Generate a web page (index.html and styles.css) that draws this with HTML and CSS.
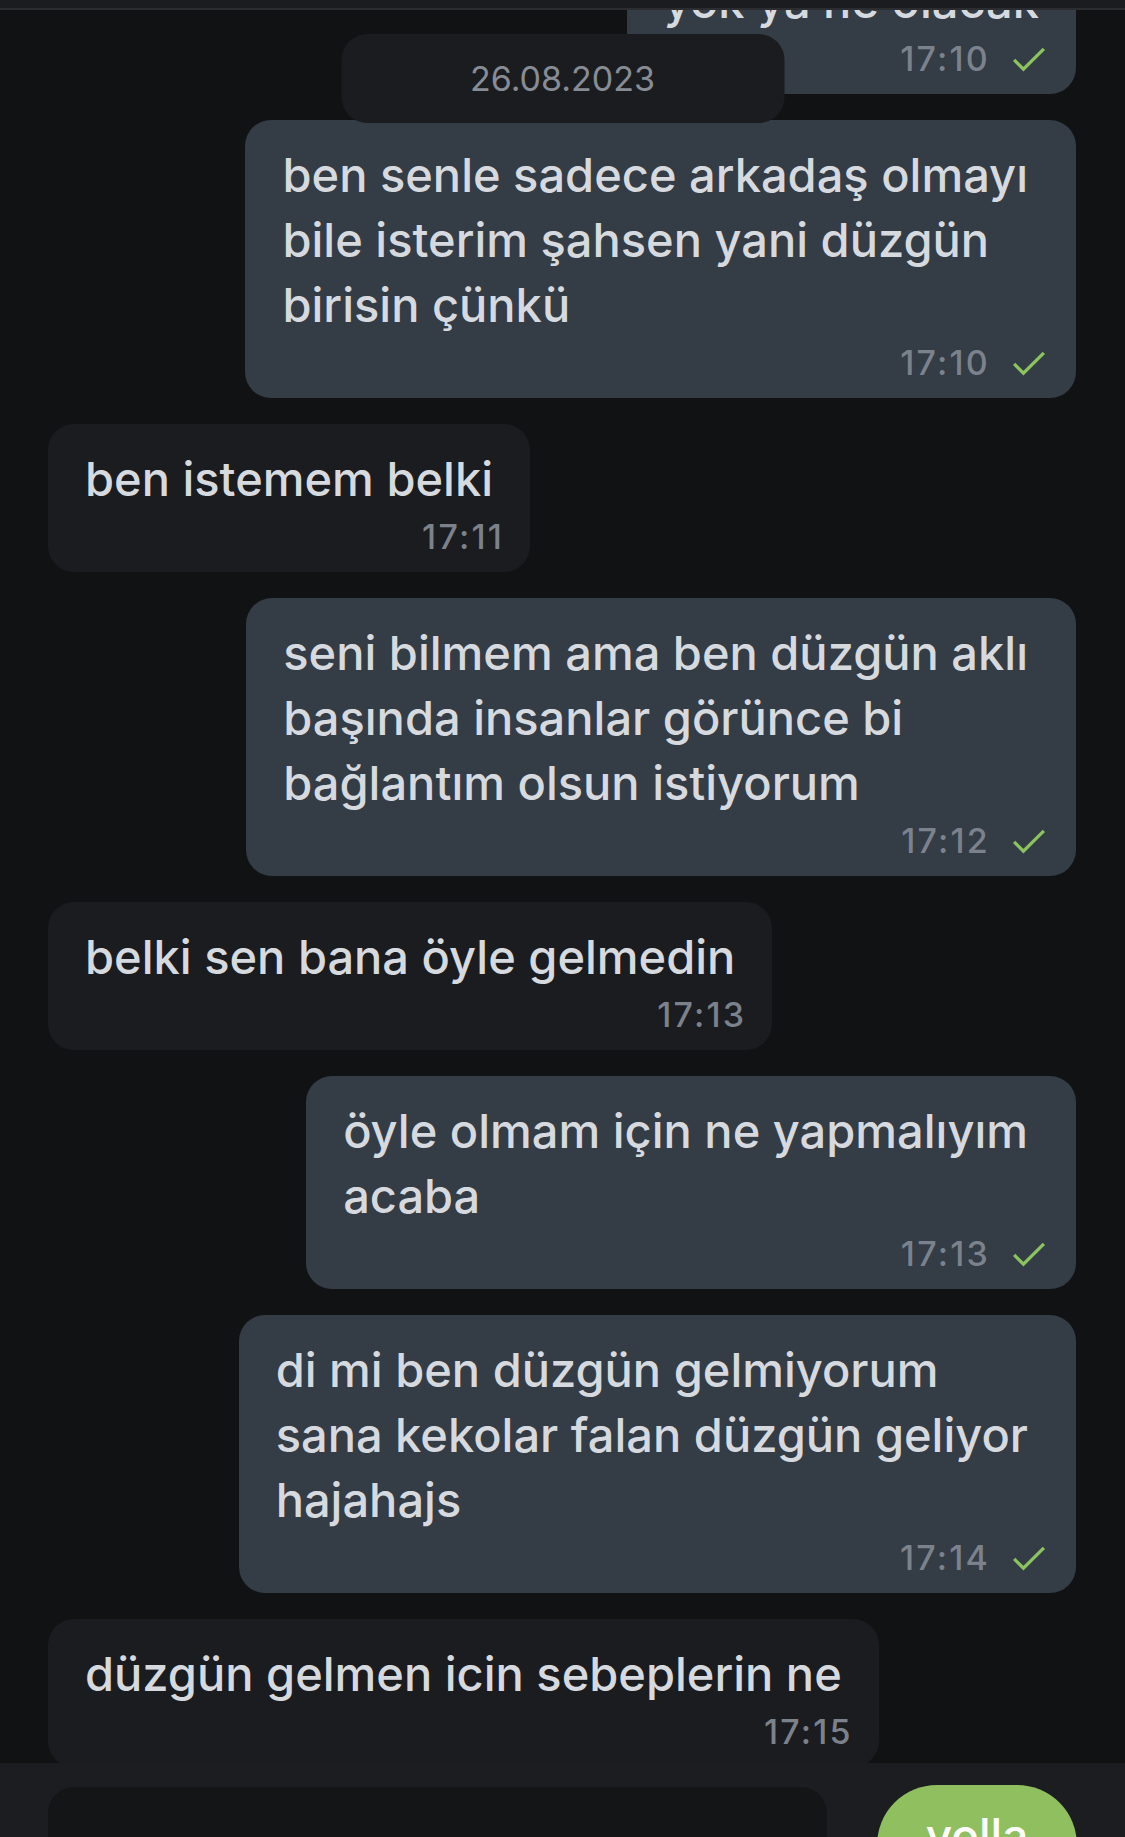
FILE: index.html
```html
<!DOCTYPE html>
<html lang="tr">
<head>
  <meta charset="UTF-8">
  <meta name="viewport" content="width=device-width, initial-scale=1.0">
  <title>Sohbet</title>
  <link rel="stylesheet" href="styles.css">
</head>
<body>
  <div class="screen">
    <div class="topbar"></div>

    <main class="chat">
      <div class="date-pill">26.08.2023</div>

      <div class="msg out first">
        <p class="text">yok ya ne olacak</p>
        <div class="meta"><span class="time">17:10</span><svg class="tick" viewBox="0 0 36 28"><polyline points="2,15 12,25 34,3"/></svg></div>
      </div>

      <div class="msg out wrap">
        <p class="text">ben senle sadece arkadaş olmayı<br>bile isterim şahsen yani düzgün<br>birisin çünkü</p>
        <div class="meta"><span class="time">17:10</span><svg class="tick" viewBox="0 0 36 28"><polyline points="2,15 12,25 34,3"/></svg></div>
      </div>

      <div class="msg in">
        <p class="text">ben istemem belki</p>
        <div class="meta"><span class="time">17:11</span></div>
      </div>

      <div class="msg out wrap">
        <p class="text">seni bilmem ama ben düzgün aklı<br>başında insanlar görünce bi<br>bağlantım olsun istiyorum</p>
        <div class="meta"><span class="time">17:12</span><svg class="tick" viewBox="0 0 36 28"><polyline points="2,15 12,25 34,3"/></svg></div>
      </div>

      <div class="msg in">
        <p class="text">belki sen bana öyle gelmedin</p>
        <div class="meta"><span class="time">17:13</span></div>
      </div>

      <div class="msg out wrap">
        <p class="text">öyle olmam için ne yapmalıyım<br>acaba</p>
        <div class="meta"><span class="time">17:13</span><svg class="tick" viewBox="0 0 36 28"><polyline points="2,15 12,25 34,3"/></svg></div>
      </div>

      <div class="msg out wrap">
        <p class="text">di mi ben düzgün gelmiyorum<br>sana kekolar falan düzgün geliyor<br>hajahajs</p>
        <div class="meta"><span class="time">17:14</span><svg class="tick" viewBox="0 0 36 28"><polyline points="2,15 12,25 34,3"/></svg></div>
      </div>

      <div class="msg in">
        <p class="text">düzgün gelmen icin sebeplerin ne</p>
        <div class="meta"><span class="time">17:15</span></div>
      </div>
    </main>

    <footer class="composer">
      <div class="input"></div>
      <button class="send">yolla</button>
    </footer>
  </div>
</body>
</html>
```

FILE: styles.css
```css
body {
  margin: 0;
  background-color: #111214;
  font-family: Inter, 'Noto Sans', 'Liberation Sans', sans-serif;
  color: #d6d9de;
}
.screen {
  height: 1837px;
  display: flex;
  flex-direction: column;
  overflow: hidden;
}
.topbar {
  flex-shrink: 0;
  height: 8px;
  background-color: #1b1c1f;
  border-bottom: 2px solid #2b2d31;
  position: relative;
  z-index: 2;
}
.chat {
  flex: 1;
  min-height: 0;
  position: relative;
  overflow: hidden;
  display: flex;
  flex-direction: column;
  gap: 26px;
  padding: 0 49px 0 48px;
}
.date-pill {
  position: absolute;
  top: 24px;
  left: 50%;
  transform: translateX(-50%);
  width: 443px;
  height: 89px;
  border-radius: 26px;
  background-color: #1b1c1f;
  color: #878c95;
  font-size: 34px;
  display: flex;
  align-items: center;
  justify-content: center;
  z-index: 1;
}
.msg {
  flex-shrink: 0;
  align-self: flex-start;
  border-radius: 26px;
  padding: 22px 37px 15px;
  background-color: #1b1c1f;
}
.msg.out {
  align-self: flex-end;
  background-color: #343c46;
}
.msg.wrap {
  padding-right: 48px;
}
.msg.first {
  margin-top: -64px;
}
.text {
  margin: 0;
  font-size: 47px;
  font-weight: 500;
  line-height: 65px;
  white-space: nowrap;
}
.meta {
  display: flex;
  justify-content: flex-end;
  align-items: center;
  gap: 22px;
  height: 40px;
  margin-top: 6px;
  margin-right: -11px;
}
.msg.out .meta {
  margin-right: -7px;
}
.msg.out.wrap .meta {
  margin-right: -18px;
}
.time {
  font-size: 34px;
  font-weight: 500;
  letter-spacing: 2.2px;
  line-height: 40px;
  color: #7b828c;
}
.tick {
  width: 34px;
  height: 26px;
  fill: none;
  stroke: #8bc45f;
  stroke-width: 3.5;
}
/* 底部输入栏 */
.composer {
  flex-shrink: 0;
  height: 74px;
  box-sizing: border-box;
  padding: 24px 48px 0;
  display: flex;
  align-items: flex-start;
  gap: 50px;
  background-color: #1c1d20;
  overflow: hidden;
}
.input {
  width: 779px;
  height: 110px;
  border-radius: 26px;
  background-color: #141517;
}
.send {
  width: 200px;
  height: 120px;
  margin-top: -2px;
  padding: 0 0 20px;
  border: none;
  border-radius: 60px;
  background-color: #8fbf5f;
  color: #ffffff;
  font-family: inherit;
  font-size: 46px;
  font-weight: 500;
  line-height: 60px;
  text-align: center;
}
```
